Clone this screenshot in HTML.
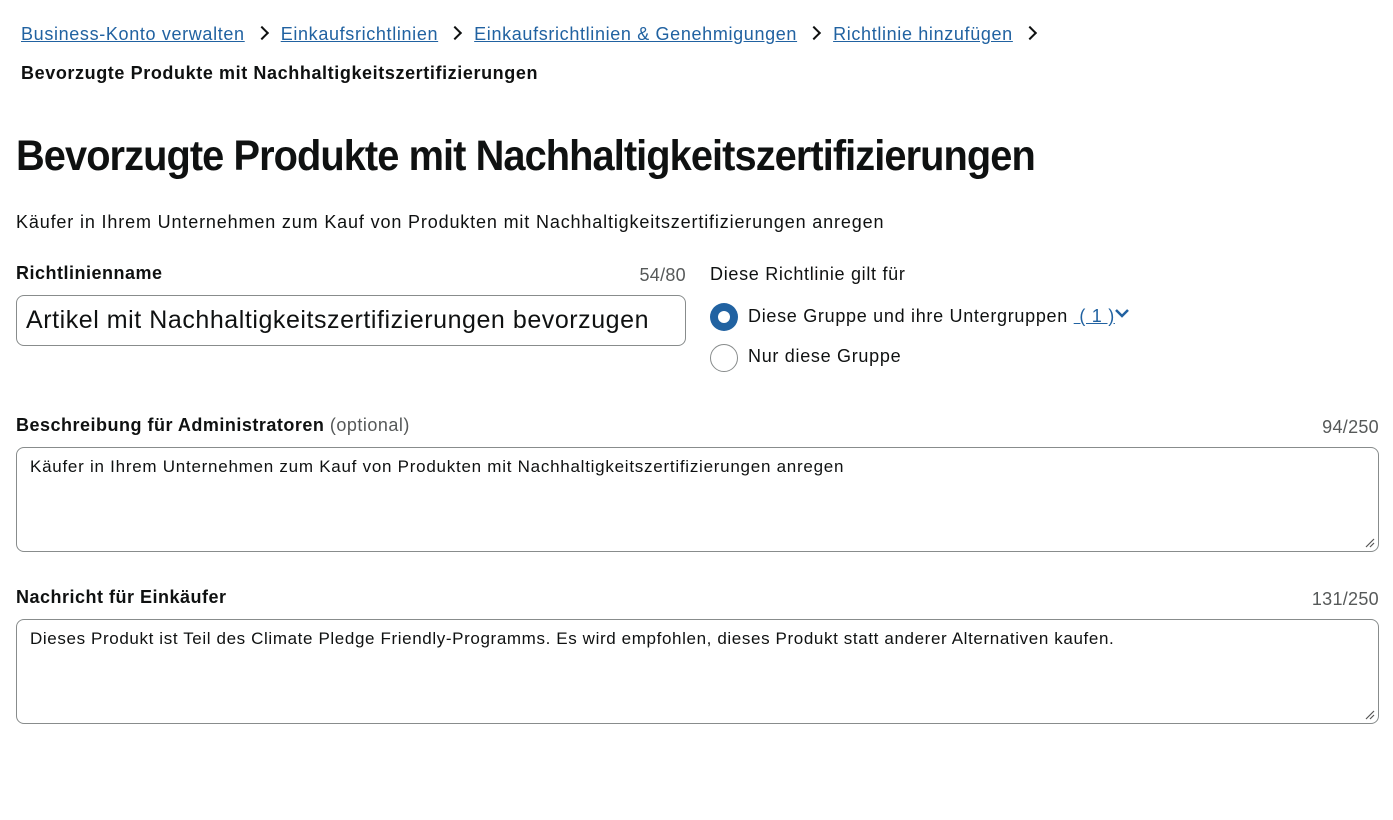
<!DOCTYPE html>
<html><head><meta charset="utf-8"><style>
body{margin:0;background:#fff;font-family:"Liberation Sans",sans-serif;color:#0f1111;width:1393px;height:820px;overflow:hidden;position:relative}
.a{position:absolute;white-space:nowrap}
.bc a{color:#2162a1;text-decoration:underline;font-size:18px;letter-spacing:0.65px}
.chev{display:inline-block;width:8px;height:8px;border-right:2.5px solid #0f1111;border-top:2.5px solid #0f1111;transform:rotate(45deg);margin:0 14px 2px 12px}
.lbl{font-weight:bold;font-size:18px;letter-spacing:0.5px}
.cnt{font-size:18px;color:#565959;letter-spacing:0.3px;text-align:right}
.box{position:absolute;border:1px solid #888c8c;border-radius:8px;box-sizing:border-box;background:#fff}
.ta{padding:9px 13px}
.grip{position:absolute;right:3px;bottom:3px;width:10px;height:10px}
</style></head><body>
<div class="a bc" style="left:21px;top:24px"><a>Business-Konto verwalten</a><span class="chev"></span><a>Einkaufsrichtlinien</a><span class="chev"></span><a>Einkaufsrichtlinien &amp; Genehmigungen</a><span class="chev"></span><a>Richtlinie hinzufügen</a><span class="chev"></span></div>
<div class="a" style="left:21px;top:63px;font-weight:bold;font-size:18px;letter-spacing:0.6px">Bevorzugte Produkte mit Nachhaltigkeitszertifizierungen</div>
<div class="a" style="left:16px;top:132px;font-weight:bold;font-size:43px;letter-spacing:-1px;transform-origin:0 0;transform:scaleX(0.925)">Bevorzugte Produkte mit Nachhaltigkeitszertifizierungen</div>
<div class="a" style="left:16px;top:212px;font-size:18px;letter-spacing:0.85px">Käufer in Ihrem Unternehmen zum Kauf von Produkten mit Nachhaltigkeitszertifizierungen anregen</div>
<div class="a lbl" style="left:16px;top:263px">Richtlinienname</div>
<div class="a cnt" style="right:707px;top:265px">54/80</div>
<div class="box" style="left:16px;top:295px;width:670px;height:51px"></div>
<div class="a" style="left:26px;top:306px;font-size:25px;letter-spacing:0.55px">Artikel mit Nachhaltigkeitszertifizierungen bevorzugen</div>
<div class="a" style="left:710px;top:264px;font-size:18px;letter-spacing:0.7px">Diese Richtlinie gilt für</div>
<div class="a" style="left:710px;top:303px;width:28px;height:28px;border-radius:50%;background:#2162a1"><div style="position:absolute;left:8px;top:8px;width:12px;height:12px;border-radius:50%;background:#fff"></div></div>
<div class="a" style="left:748px;top:306px;font-size:18px;letter-spacing:0.7px">Diese Gruppe und ihre Untergruppen <span style="color:#2162a1;text-decoration:underline">&nbsp;( 1 )</span></div>
<svg class="a" style="left:1114px;top:307px" width="16" height="12"><path d="M2 3l6 6 6-6" stroke="#2162a1" stroke-width="2.5" fill="none"/></svg>
<div class="a" style="left:710px;top:344px;width:26px;height:26px;border-radius:50%;border:1px solid #888c8c"></div>
<div class="a" style="left:748px;top:346px;font-size:18px;letter-spacing:0.7px">Nur diese Gruppe</div>
<div class="a lbl" style="left:16px;top:415px">Beschreibung für Administratoren <span style="font-weight:normal;color:#565959">(optional)</span></div>
<div class="a cnt" style="right:14px;top:417px">94/250</div>
<div class="box ta" style="left:16px;top:447px;width:1363px;height:105px;font-size:17px;letter-spacing:0.74px">Käufer in Ihrem Unternehmen zum Kauf von Produkten mit Nachhaltigkeitszertifizierungen anregen<svg class="grip"><path d="M9 1L1 9M9 5L5 9" stroke="#555" stroke-width="1.2"/></svg></div>
<div class="a lbl" style="left:16px;top:587px">Nachricht für Einkäufer</div>
<div class="a cnt" style="right:14px;top:589px">131/250</div>
<div class="box ta" style="left:16px;top:619px;width:1363px;height:105px;font-size:17px;letter-spacing:0.62px">Dieses Produkt ist Teil des Climate Pledge Friendly-Programms. Es wird empfohlen, dieses Produkt statt anderer Alternativen kaufen.<svg class="grip"><path d="M9 1L1 9M9 5L5 9" stroke="#555" stroke-width="1.2"/></svg></div>
</body></html>
